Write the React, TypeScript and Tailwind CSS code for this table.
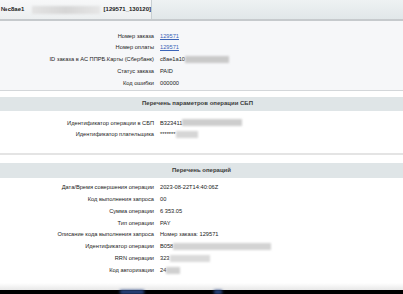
import React from 'react';

const Blur = ({ w, tone = 'bg-[#cfcfcf]' }: { w: number; tone?: string }) => (
  <span
    className={`inline-block h-[7px] align-middle blur-[0.8px] ${tone}`}
    style={{ width: w }}
  />
);

type Row = { label: string; value: React.ReactNode };

const Rows = ({ rows }: { rows: Row[] }) => (
  <div className="flex flex-col">
    {rows.map((r) => (
      <div key={r.label} className="flex h-[11.8px] items-center">
        <div className="w-[155px] shrink-0 pr-[1px] text-right">{r.label}</div>
        <div className="flex items-center pl-[5px]">{r.value}</div>
      </div>
    ))}
  </div>
);

const Header = ({ title, className }: { title: string; className: string }) => (
  <div
    className={`flex items-center justify-center bg-[#dfe5e7] text-[6px] font-semibold text-[#3a3a3a] ${className}`}
  >
    {title}
  </div>
);

export default function App() {
  const linkCls = 'text-[#3b64b8] underline';

  return (
    <div
      className="flex h-[294px] w-[403px] flex-col overflow-hidden bg-white text-[5.7px] text-[#222]"
      style={{ fontFamily: '"Liberation Sans", Arial, sans-serif' }}
    >
      {/* tab bar */}
      <div className="flex h-[19px] shrink-0 bg-gradient-to-b from-[#eef2f3] to-[#e1e7e9]">
        <div className="flex w-[152px] items-center gap-[4px] border-r border-[#c9cfd2] bg-gradient-to-b from-[#f7f8f9] to-[#eceff0] pl-[1px] text-[6px] font-bold">
          <span>№c8ae1</span>
          <span className="ml-[4px] inline-block h-[8px] w-[68px] bg-gradient-to-r from-[#e3e3e3] via-[#d6d6d6] to-[#e6e6e6] blur-[1px]" />
          <span>[129571_130120]</span>
        </div>
      </div>
      <div className="h-[2px] shrink-0 bg-[#c6cacd]" />

      {/* order panel */}
      <div className="shrink-0 border-b border-[#d4d7da] bg-[#f6f7f9] pt-[9px] pb-[1px]">
        <Rows
          rows={[
            { label: 'Номер заказа', value: <span className={linkCls}>129571</span> },
            { label: 'Номер оплаты', value: <span className={linkCls}>129571</span> },
            {
              label: 'ID заказа в АС ППРБ.Карты (Сбербанк)',
              value: (
                <>
                  <span>c8ae1a10</span>
                  <Blur w={44} tone="bg-[#c9c9c9]" />
                </>
              ),
            },
            { label: 'Статус заказа', value: 'PAID' },
            { label: 'Код ошибки', value: '000000' },
          ]}
        />
      </div>

      <div className="h-[6px] shrink-0" />
      <Header title="Перечень параметров операции СБП" className="h-[14px] shrink-0 pr-[8px]" />
      <div className="shrink-0 pt-[6px]">
        <Rows
          rows={[
            {
              label: 'Идентификатор операции в СБП',
              value: (
                <>
                  <span>B323411</span>
                  <Blur w={60} tone="bg-[#cdcdcd]" />
                </>
              ),
            },
            {
              label: 'Идентификатор плательщика',
              value: (
                <>
                  <span>*******</span>
                  <Blur w={22} tone="bg-[#d6d6d6]" />
                </>
              ),
            },
          ]}
        />
      </div>
      <div className="h-[12px] shrink-0" />
      <div className="h-[2px] shrink-0 bg-[#e4e4e4]" />
      <div className="h-[8px] shrink-0" />
      <Header title="Перечень операций" className="h-[15px] shrink-0" />
      <div className="shrink-0 pt-[4px]">
        <Rows
          rows={[
            { label: 'Дата/Время совершения операции', value: '2023-08-22T14:40:06Z' },
            { label: 'Код выполнения запроса', value: '00' },
            { label: 'Сумма операции', value: '6 353.05' },
            { label: 'Тип операции', value: 'PAY' },
            { label: 'Описание кода выполнения запроса', value: 'Номер заказа: 129571' },
            {
              label: 'Идентификатор операции',
              value: (
                <>
                  <span>B058</span>
                  <Blur w={98} tone="bg-[#d3d3d3]" />
                </>
              ),
            },
            {
              label: 'RRN операции',
              value: (
                <>
                  <span>323</span>
                  <Blur w={40} tone="bg-[#dadada]" />
                </>
              ),
            },
            {
              label: 'Код авторизации',
              value: (
                <>
                  <span>24</span>
                  <Blur w={14} tone="bg-[#d0d0d0]" />
                </>
              ),
            },
          ]}
        />
      </div>

      <div className="flex-1 bg-gradient-to-b from-white via-white to-[#e8e8e8]" />
      <div className="relative h-[4px] shrink-0 bg-black">
        <span className="absolute left-[120px] top-0 h-[4px] w-[24px] bg-[#2c4a8a] blur-[1.5px]" />
        <span className="absolute left-[214px] top-0 h-[4px] w-[8px] bg-[#2c4a8a] blur-[1.5px]" />
      </div>
    </div>
  );
}
